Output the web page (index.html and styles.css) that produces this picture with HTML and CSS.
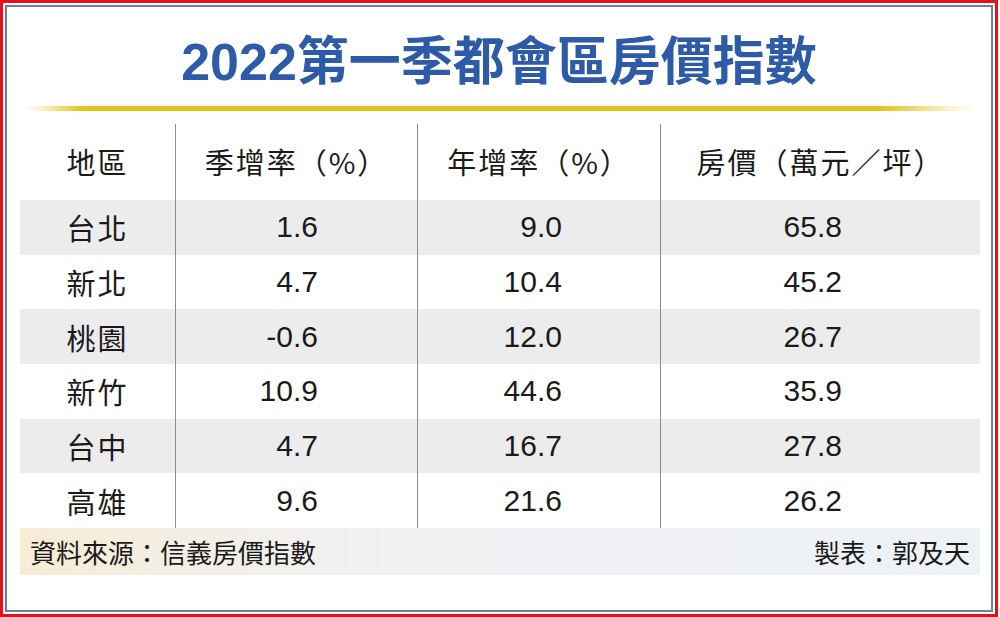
FILE: index.html
```html
<!DOCTYPE html>
<html lang="zh-Hant">
<head>
<meta charset="utf-8">
<title>2022第一季都會區房價指數</title>
<link rel="stylesheet" href="styles.css">
</head>
<body>
<div class="frame">
  <div class="inner">
    <h1 class="title">2022第一季都會區房價指數</h1>
    <div class="gold-rule"></div>
    <div class="table">
      <div class="row head">
        <div class="cell name">地區</div>
        <div class="cell">季增率（%）</div>
        <div class="cell">年增率（%）</div>
        <div class="cell">房價（萬元／坪）</div>
      </div>
      <div class="row data shaded">
        <div class="cell name">台北</div>
        <div class="cell num c2">1.6</div>
        <div class="cell num c3">9.0</div>
        <div class="cell num c4">65.8</div>
      </div>
      <div class="row data">
        <div class="cell name">新北</div>
        <div class="cell num c2">4.7</div>
        <div class="cell num c3">10.4</div>
        <div class="cell num c4">45.2</div>
      </div>
      <div class="row data shaded">
        <div class="cell name">桃園</div>
        <div class="cell num c2">-0.6</div>
        <div class="cell num c3">12.0</div>
        <div class="cell num c4">26.7</div>
      </div>
      <div class="row data">
        <div class="cell name">新竹</div>
        <div class="cell num c2">10.9</div>
        <div class="cell num c3">44.6</div>
        <div class="cell num c4">35.9</div>
      </div>
      <div class="row data shaded">
        <div class="cell name">台中</div>
        <div class="cell num c2">4.7</div>
        <div class="cell num c3">16.7</div>
        <div class="cell num c4">27.8</div>
      </div>
      <div class="row data">
        <div class="cell name">高雄</div>
        <div class="cell num c2">9.6</div>
        <div class="cell num c3">21.6</div>
        <div class="cell num c4">26.2</div>
      </div>
    </div>
    <div class="footer">
      <span class="source">資料來源：信義房價指數</span>
      <span class="credit">製表：郭及天</span>
    </div>
  </div>
</div>
</body>
</html>
```

FILE: styles.css
```css
html, body {
  margin: 0;
  padding: 0;
  background: #ffffff;
}

body {
  font-family: "Liberation Sans", "Noto Sans CJK TC", sans-serif;
  color: #1a1a1a;
}

.frame {
  width: 998px;
  height: 617px;
  box-sizing: border-box;
  border: 3px solid #e8101c;
  padding: 2px;
}

.inner {
  height: 100%;
  box-sizing: border-box;
  border: 2px solid #6b80a3;
  display: flex;
  flex-direction: column;
}

.title {
  margin: 25px 0 0 0;
  height: 60px;
  line-height: 60px;
  text-align: center;
  font-family: "Liberation Sans", "Noto Sans CJK TC", sans-serif;
  font-weight: 700;
  font-size: 52px;
  color: #2e5ba7;
}

.gold-rule {
  margin: 14px 0 0 18px;
  width: 950px;
  height: 5px;
  background: linear-gradient(to right,
    rgba(228, 196, 30, 0) 0%,
    rgba(228, 196, 30, 0.35) 2.5%,
    #e3c21c 6%,
    #e3c21c 90%,
    rgba(228, 196, 30, 0.35) 96%,
    rgba(228, 196, 30, 0) 100%);
}

.table {
  margin: 13px 0 0 13px;
  width: 960px;
  display: flex;
  flex-direction: column;
}

.row {
  display: grid;
  grid-template-columns: 155px 242px 243px 320px;
}

.row.head {
  height: 76px;
}

.row.data {
  height: 54.67px;
}

.row.shaded {
  background: #ececec;
}

.cell {
  display: flex;
  align-items: center;
  justify-content: center;
  font-family: "Noto Sans CJK TC", sans-serif;
  font-size: 29px;
  letter-spacing: 2px;
  color: #1a1a1a;
}

.head .cell {
  padding-bottom: 3px;
  box-sizing: border-box;
}

.cell + .cell {
  border-left: 1px solid #8c8c8c;
}

.cell.num {
  justify-content: flex-end;
  font-family: "Liberation Sans", sans-serif;
  font-size: 30px;
  letter-spacing: 0;
}

.cell.c2 { padding-right: 99px; }
.cell.c3 { padding-right: 98px; }
.cell.c4 { padding-right: 138px; }

.footer {
  margin-left: 13px;
  width: 960px;
  height: 47px;
  box-sizing: border-box;
  padding: 0 10px;
  display: flex;
  align-items: center;
  justify-content: space-between;
  background: linear-gradient(to right, #f7ecd4 0%, #f3efe6 18%, #eff1f3 40%, #eef1f5 100%);
  font-family: "Noto Sans CJK TC", sans-serif;
  font-size: 26px;
  color: #1a1a1a;
}
```
